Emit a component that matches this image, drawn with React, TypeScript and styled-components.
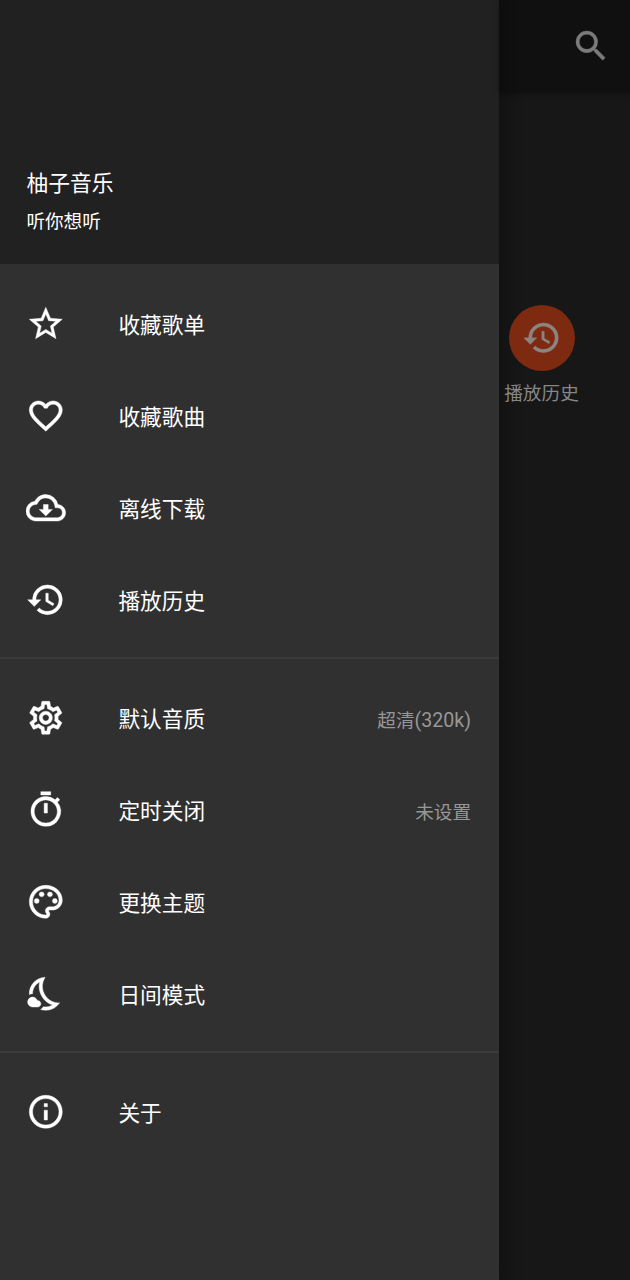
import React from "react";
import styled, { createGlobalStyle } from "styled-components";
import type { IconType } from "react-icons";
import {
  MdFavoriteBorder,
  MdHistory,
  MdInfoOutline,
  MdOutlineCloudDownload,
  MdOutlineNightsStay,
  MdOutlinePalette,
  MdOutlineSettings,
  MdOutlineTimer,
  MdSearch,
  MdStarBorder,
} from "react-icons/md";

const GlobalStyle = createGlobalStyle`
  * { box-sizing: border-box; }
  body {
    margin: 0;
    background: #171717;
    font-family: Roboto, "Noto Sans CJK SC", sans-serif;
  }
  svg path[fill="none"] { stroke: none; }
`;

const Screen = styled.div`
  display: flex;
  width: 630px;
  height: 1280px;
  overflow: hidden;
  background: #171717;
`;

const Drawer = styled.nav`
  display: flex;
  flex-direction: column;
  flex: 0 0 499px;
  background: #303030;
`;

const DrawerHeader = styled.header`
  display: flex;
  flex-direction: column;
  justify-content: flex-end;
  gap: 8px;
  height: 264px;
  padding: 0 26px 28px 26.4px;
  background: #212121;
  color: #fff;
`;

const Title = styled.h1`
  margin: 0;
  font-size: 21.8px;
  font-weight: 400;
  line-height: 32px;
`;

const Subtitle = styled.p`
  margin: 0;
  font-size: 18.6px;
  line-height: 28px;
`;

const Section = styled.section`
  padding: 13.4px 0 11.6px;

  & + & {
    border-top: 2px solid #3b3b3b;
    padding-top: 12.4px;
    padding-bottom: 11.6px;
  }
`;

const Row = styled.div`
  display: flex;
  align-items: center;
  height: 92px;
  padding: 0 28px 0 26.2px;
  color: #fff;

  svg {
    flex: none;
    width: 39.6px;
    height: 39.6px;
    stroke: currentColor;
    stroke-width: 0.25px;
  }
`;

const Label = styled.span`
  flex: 1;
  padding: 6px 0 0 52.6px;
  font-size: 21.7px;
  line-height: 32px;
`;

const Value = styled.span`
  padding-top: 6.4px;
  font-size: 18.6px;
  line-height: 28px;
  color: #979797;
`;

const Quality = styled.span`
  font-size: 19.6px;
`;

const Backdrop = styled.main`
  flex: 1;
  display: flex;
  flex-direction: column;
  background: linear-gradient(to right, #121212, #171717 26px);
`;

const TopBar = styled.div`
  display: flex;
  justify-content: flex-end;
  height: 92px;
  padding: 25.5px 19px 0 0;
  background: linear-gradient(to right, #0d0d0d, #101010 26px);
  box-shadow: 0 2px 5px rgba(0, 0, 0, 0.3);
  color: #7b7b7b;

  svg {
    stroke: currentColor;
    stroke-width: 0.25px;
  }
`;

const Shortcut = styled.div`
  display: flex;
  flex-direction: column;
  align-items: center;
  width: 85px;
  margin-top: 213px;
  color: #868686;
`;

const Disc = styled.div`
  display: flex;
  align-items: center;
  justify-content: center;
  width: 66px;
  height: 66px;
  border-radius: 50%;
  background: #7d2a11;
  color: #8b8480;

  svg {
    stroke: currentColor;
    stroke-width: 0.2px;
  }
`;

const ShortcutLabel = styled.span`
  margin-top: 9px;
  font-size: 18.7px;
  line-height: 28px;
  white-space: nowrap;
`;

interface Item {
  icon: IconType;
  label: string;
  value?: React.ReactNode;
}

const sections: Item[][] = [
  [
    { icon: MdStarBorder, label: "收藏歌单" },
    { icon: MdFavoriteBorder, label: "收藏歌曲" },
    { icon: MdOutlineCloudDownload, label: "离线下载" },
    { icon: MdHistory, label: "播放历史" },
  ],
  [
    {
      icon: MdOutlineSettings,
      label: "默认音质",
      value: (
        <>
          超清<Quality>(320k)</Quality>
        </>
      ),
    },
    { icon: MdOutlineTimer, label: "定时关闭", value: "未设置" },
    { icon: MdOutlinePalette, label: "更换主题" },
    { icon: MdOutlineNightsStay, label: "日间模式" },
  ],
  [{ icon: MdInfoOutline, label: "关于" }],
];

export default function App() {
  return (
    <Screen lang="zh-CN">
      <GlobalStyle />
      <Drawer>
        <DrawerHeader>
          <Title>柚子音乐</Title>
          <Subtitle>听你想听</Subtitle>
        </DrawerHeader>
        {sections.map((items, i) => (
          <Section key={i}>
            {items.map(({ icon: Icon, label, value }) => (
              <Row key={label}>
                <Icon />
                <Label>{label}</Label>
                {value && <Value>{value}</Value>}
              </Row>
            ))}
          </Section>
        ))}
      </Drawer>
      <Backdrop>
        <TopBar>
          <MdSearch size={40} />
        </TopBar>
        <Shortcut>
          <Disc>
            <MdHistory size={39.6} />
          </Disc>
          <ShortcutLabel>播放历史</ShortcutLabel>
        </Shortcut>
      </Backdrop>
    </Screen>
  );
}
